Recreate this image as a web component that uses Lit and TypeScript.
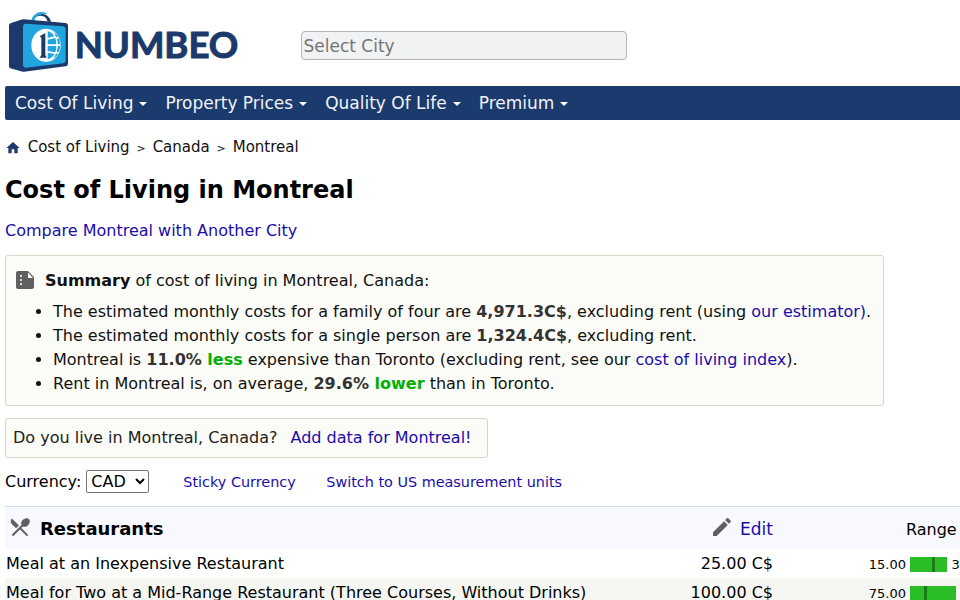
import { LitElement, html, css, svg } from "lit";
import { customElement } from "lit/decorators.js";

const NAV = ["Cost Of Living", "Property Prices", "Quality Of Life", "Premium"];

const ROWS = [
  { name: "Meal at an Inexpensive Restaurant", price: "25.00 C$", min: "15.00", max: "35.00", width: 37, mark: 22 },
  { name: "Meal for Two at a Mid-Range Restaurant (Three Courses, Without Drinks)", price: "100.00 C$", min: "75.00", max: "150.00", width: 46, mark: 14 },
];

const icon = (d: string, cls: string) =>
  html`<svg class=${cls} viewBox="0 0 24 24" aria-hidden="true">${svg`<path d=${d}></path>`}</svg>`;

const HOME = "M10 20v-6h4v6h5v-8h3L12 3 2 12h3v8z";
const SUMMARY = "M15 3H5c-1.1 0-1.99.9-1.99 2L3 19c0 1.1.89 2 1.99 2H19c1.1 0 2-.9 2-2V9l-6-6zM8 17c-.55 0-1-.45-1-1s.45-1 1-1 1 .45 1 1-.45 1-1 1zm0-4c-.55 0-1-.45-1-1s.45-1 1-1 1 .45 1 1-.45 1-1 1zm0-4c-.55 0-1-.45-1-1s.45-1 1-1 1 .45 1 1-.45 1-1 1zm7 1V4.500l5 5.500z";
const RESTAURANT = "M8.100 13.340l2.830-2.830L3.910 3.500c-1.560 1.560-1.560 4.090 0 5.660l4.190 4.180zm6.780-1.810c1.530.71 3.680.21 5.270-1.380 1.910-1.910 2.280-4.650.81-6.120-1.460-1.460-4.200-1.100-6.120.81-1.590 1.590-2.090 3.740-1.380 5.270L3.700 19.870l1.410 1.410L12 14.410l6.880 6.880 1.410-1.410L13.410 13l1.470-1.470z";
const EDIT = "M3 17.250V21h3.750L17.810 9.940l-3.750-3.750L3 17.250zM20.710 7.040c.39-.39.39-1.020 0-1.410l-2.340-2.340c-.39-.39-1.020-.39-1.410 0l-1.830 1.830 3.750 3.750 1.830-1.830z";

@customElement("app-root")
export class AppRoot extends LitElement {
  static styles = css`
    :host { display: block; width: 960px; height: 600px; overflow: hidden; background: #fff; color: #000;
      font: 16px/20px "DejaVu Sans", sans-serif; }
    * { box-sizing: border-box; }
    a { color: #1a0dab; text-decoration: none; }
    svg { display: block; flex: none; }
    .page { width: 1100px; padding-left: 5px; }
    header { height: 86px; display: flex; align-items: flex-start; }
    .logo { width: 245px; height: 75px; margin: 5px 51px 0 0; }
    .wordmark { font: 700 110px "Lato", sans-serif; fill: #1b396b; stroke: #1b396b; stroke-width: 3px; }
    .search { width: 326px; height: 29px; margin-top: 31px; padding: 0 1.500px; border: 1px solid #b4b4b4; border-radius: 4px;
      background: #f1f2f4; font: 17px "DejaVu Sans", sans-serif; }
    .search::placeholder { color: #757575; }
    nav { height: 34px; background: #1b3a6d; border-radius: 2px; display: flex; align-items: center; padding-left: 10px; gap: 18.200px;
      color: #f0f3f8; font-size: 17px; }
    .item { display: flex; align-items: center; gap: 6px; }
    .caret { border: 4px solid transparent; border-top-color: #fff; border-bottom: 0; margin: 2px 0 0 -0.200px; width: 8px; }
    .crumbs { height: 20px; margin-top: 17px; display: flex; align-items: center; font-size: 15px; color: #111; }
    .home { width: 16px; height: 16px; fill: #1b3a6d; margin: 2px 6.700px 0 0; }
    .sep { font-size: 11px; margin: 3px 6.900px 0; }
    h1 { margin: 19px 0 0; font-size: 24px; line-height: 28px; }
    .compare { margin-top: 17px; }
    .summary { width: 879px; height: 151px; margin-top: 14px; border: 1px solid #d6d8c8; border-radius: 3px; background: #fbfcf7;
      color: #111; padding: 12px 7px; }
    .lead { display: flex; align-items: center; height: 24px; gap: 8px; }
    .lead span { padding-top: 2px; }
    .gray { width: 24px; height: 24px; fill: #606060; }
    ul { margin: 8px 0 0; padding-left: 40px; line-height: 24px; }
    li b { color: #333; }
    li .good { color: #00b000; }
    .live { width: 483px; height: 40px; margin-top: 12px; padding: 0 7px; border: 1px solid #d6d8c8; border-radius: 3px;
      background: #fbfcf7; color: #222; display: flex; align-items: center; gap: 13px; white-space: nowrap; }
    .currency { height: 24px; margin-top: 12px; display: flex; align-items: center; }
    select { height: 23px; width: 63px; margin: 0 34px 1px 5px; padding: 0; border: 1px solid #767676; border-radius: 2px;
      background: #fff; color: #000; font: 16px "DejaVu Sans", sans-serif; }
    .small { font-size: 14.400px; margin-right: 30.500px; }
    .table { margin-top: 12px; }
    .row { height: 29px; display: grid; grid-template-columns: 590px 177px 1fr; align-items: center; padding-left: 1px; }
    .row.alt { background: #f5f6f2; }
    .row.head { height: 43px; background: #f8f9ff; border-top: 1px solid #cce0f2; padding-left: 3px;
      grid-template-columns: 588px 177px 1fr; }
    .title { display: flex; align-items: center; gap: 8px; font-size: 18px; font-weight: bold; }
    .title span, .edit a { padding-top: 2px; }
    .edit { display: flex; align-items: center; justify-content: flex-end; gap: 6px; font-size: 17px; }
    .head .gray { margin-top: -3px; }
    .title .gray { margin-left: -0.500px; margin-right: 0.500px; }
    .range-title { padding-left: 133px; padding-top: 3px; }
    .price { text-align: right; }
    .range { display: flex; align-items: center; font-size: 13px; padding-top: 2px; }
    .min { width: 133px; text-align: right; margin-right: 4px; }
    .bar { height: 15px; background: #2bbd25; margin-right: 4.500px; }
    .mark { width: 3px; height: 15px; background: #1b7d18; }
  `;

  private logo() {
    return html`<svg class="logo" viewBox="15 0 735 225" role="img" aria-label="Numbeo">
      <path d="M94 45Q102 22 124 21Q137 21 143 27Q128 24 118 29Q107 34 103 45Z" fill="#20a5df"></path>
      <path d="M109 36Q117 27 130 27Q147 30 153 50H143Q138 34 127 33Q117 31 109 36Z" fill="#1b396b"></path>
      <path d="M33 54L63 44Q67 42 72 43L196 54Q204 55 204 63V176Q204 183 197 184L72 200Q67 201 63 199L31 190Q27 188 27 184V61Q27 56 33 54Z" fill="#1b396b"></path>
      <path d="M78 56L188 64Q197 65 197 74V167Q197 174 189 175L78 188Q69 188 69 179V65Q69 56 78 56Z" fill="#20a5df"></path>
      <ellipse cx="138" cy="121" rx="44" ry="50" fill="#fff"></ellipse>
      <path d="M143 78Q158 84 163 94L143 99ZM143 104L166 99Q169 109 169 118H143ZM143 123H169Q169 133 166 142L143 138ZM143 143L164 147Q157 159 143 163ZM162 82Q171 89 175 96L168 96ZM171 101L177 100Q180 108 180 118H174ZM174 123H180Q180 132 177 141L170 140ZM168 146L175 145Q170 156 160 161Z" fill="#20a5df"></path>
      <path d="M119 94L136 84V150L140 158H119L124 150V98Z" fill="#1b396b"></path>
      <text class="wordmark" x="224" y="160" textLength="491" lengthAdjust="spacingAndGlyphs">NUMBEO</text>
    </svg>`;
  }

  render() {
    return html`<div class="page">
      <header>${this.logo()}<input class="search" placeholder="Select City" /></header>
      <nav>${NAV.map((n) => html`<span class="item">${n}<i class="caret"></i></span>`)}</nav>
      <div class="crumbs">${icon(HOME, "home")}<span>Cost of Living</span><span class="sep">&gt;</span><span>Canada</span><span class="sep">&gt;</span><span>Montreal</span></div>
      <h1>Cost of Living in Montreal</h1>
      <div class="compare"><a href="#">Compare Montreal with Another City</a></div>
      <section class="summary">
        <div class="lead">${icon(SUMMARY, "gray")}<span><b>Summary</b> of cost of living in Montreal, Canada:</span></div>
        <ul>
          <li>The estimated monthly costs for a family of four are <b>4,971.3C$</b>, excluding rent (using <a href="#">our estimator)</a>.</li>
          <li>The estimated monthly costs for a single person are <b>1,324.4C$</b>, excluding rent.</li>
          <li>Montreal is <b>11.0% <span class="good">less</span></b> expensive than Toronto (excluding rent, see our <a href="#">cost of living index</a>).</li>
          <li>Rent in Montreal is, on average, <b>29.6% <span class="good">lower</span></b> than in Toronto.</li>
        </ul>
      </section>
      <section class="live"><span>Do you live in Montreal, Canada?</span><a href="#">Add data for Montreal!</a></section>
      <div class="currency"><span>Currency:</span><select><option>CAD</option></select><a class="small" href="#">Sticky Currency</a><a class="small" href="#">Switch to US measurement units</a></div>
      <div class="table">
        <div class="row head"><div class="title">${icon(RESTAURANT, "gray")}<span>Restaurants</span></div>
          <div class="edit">${icon(EDIT, "gray")}<a href="#">Edit</a></div><div class="range-title">Range</div></div>
        ${ROWS.map((r, i) => html`<div class="row ${i % 2 ? "alt" : ""}"><span>${r.name}</span><span class="price">${r.price}</span>
          <div class="range"><span class="min">${r.min}</span><div class="bar" style="width:${r.width}px;padding-left:${r.mark}px"><div class="mark"></div></div><span>${r.max}</span></div></div>`)}
      </div>
    </div>`;
  }
}
